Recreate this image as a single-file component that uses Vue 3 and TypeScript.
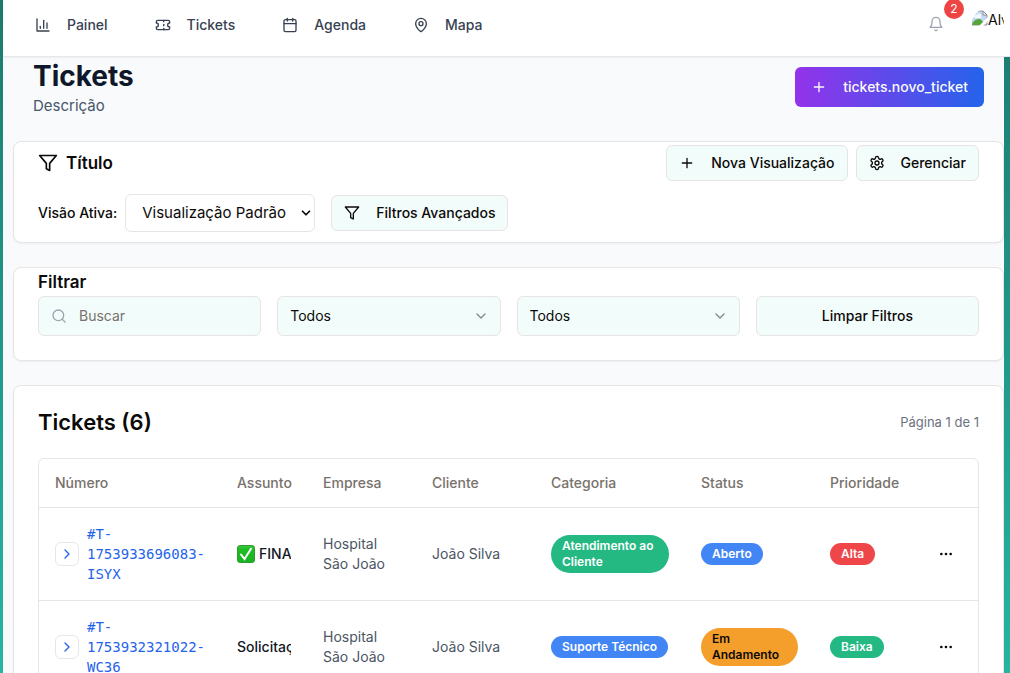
<script setup lang="ts">
import { ref } from 'vue'

interface NavItem {
  label: string
  paths: string[]
}

interface Ticket {
  number: string
  done: boolean
  subject: string
  company: string
  client: string
  category: { label: string; tone: string }
  status: { label: string; tone: string }
  priority: { label: string; tone: string }
}

const nav: NavItem[] = [
  { label: 'Painel', paths: ['M3 3v18h18', 'M18 17V9', 'M13 17V5', 'M8 17v-3'] },
  {
    label: 'Tickets',
    paths: [
      'M2 9a3 3 0 0 1 0 6v2a2 2 0 0 0 2 2h16a2 2 0 0 0 2-2v-2a3 3 0 0 1 0-6V7a2 2 0 0 0-2-2H4a2 2 0 0 0-2 2Z',
      'M13 5v2',
      'M13 17v2',
      'M13 11v2',
    ],
  },
  {
    label: 'Agenda',
    paths: ['M8 2v4', 'M16 2v4', 'M5 4h14a2 2 0 0 1 2 2v14a2 2 0 0 1-2 2H5a2 2 0 0 1-2-2V6a2 2 0 0 1 2-2Z', 'M3 10h18'],
  },
  {
    label: 'Mapa',
    paths: [
      'M20 10c0 5-5.54 10.19-7.4 11.8a1 1 0 0 1-1.2 0C9.54 20.19 4 15 4 10a8 8 0 0 1 16 0',
      'M15 10a3 3 0 1 1-6 0a3 3 0 1 1 6 0',
    ],
  },
]

const tickets: Ticket[] = [
  {
    number: '#T-1753933696083-ISYX',
    done: true,
    subject: 'FINA',
    company: 'Hospital São João',
    client: 'João Silva',
    category: { label: 'Atendimento ao Cliente', tone: 'green' },
    status: { label: 'Aberto', tone: 'blue' },
    priority: { label: 'Alta', tone: 'red' },
  },
  {
    number: '#T-1753932321022-WC36',
    done: false,
    subject: 'Solicitaç',
    company: 'Hospital São João',
    client: 'João Silva',
    category: { label: 'Suporte Técnico', tone: 'blue' },
    status: { label: 'Em Andamento', tone: 'amber' },
    priority: { label: 'Baixa', tone: 'green' },
  },
]

const columns = ['Número', 'Assunto', 'Empresa', 'Cliente', 'Categoria', 'Status', 'Prioridade']
const search = ref('')
</script>

<template>
  <div class="shell">
    <header class="topbar">
      <nav class="nav">
        <a v-for="item in nav" :key="item.label" href="#" class="nav-link">
          <svg class="icon" viewBox="0 0 24 24"><path v-for="d in item.paths" :key="d" :d="d" /></svg>
          {{ item.label }}
        </a>
      </nav>
      <div class="account">
        <button class="bell" type="button" aria-label="Notificações">
          <svg class="icon" viewBox="0 0 24 24">
            <path d="M6 8a6 6 0 0 1 12 0c0 7 3 9 3 9H3s3-2 3-9" />
            <path d="M10.3 21a1.94 1.94 0 0 0 3.4 0" />
          </svg>
          <span class="count">2</span>
        </button>
        <a href="#" class="avatar">
          <svg class="broken" viewBox="0 0 16 16">
            <path d="M0 1h11l4 4v10H0Z" fill="#c5d8f7" />
            <path d="M0 1h11l4 4v10H0Z" fill="none" stroke="#9a9a9a" />
            <path d="M11 1v4h4Z" fill="#fff" stroke="#8a8a8a" />
            <path d="M2 7a2 2 0 0 1 3-2a2 2 0 0 1 4 1a1.5 1.5 0 0 1 0 2H3Z" fill="#f4f8ff" />
            <path d="M0 15c1-4 4-6 7-6s4 3 5 6Z" fill="#55a63a" />
            <path d="M7 16L16 7v4l-5 5Z" fill="#fff" />
          </svg>
          <span>Alv</span>
        </a>
      </div>
    </header>

    <main class="page">
      <div class="heading">
        <div>
          <h1>Tickets</h1>
          <p>Descrição</p>
        </div>
        <button class="primary" type="button">
          <svg class="icon" viewBox="0 0 24 24"><path d="M5 12h14M12 5v14" /></svg>
          tickets.novo_ticket
        </button>
      </div>

      <section class="card views">
        <div class="bar">
          <h2 class="with-icon">
            <svg class="icon large" viewBox="0 0 24 24"><path d="M22 3H2l8 9.46V19l4 2v-8.54L22 3Z" /></svg>
            Título
          </h2>
          <div class="actions">
            <button class="btn" type="button">
              <svg class="icon" viewBox="0 0 24 24"><path d="M5 12h14M12 5v14" /></svg>
              Nova Visualização
            </button>
            <button class="btn" type="button">
              <svg class="icon" viewBox="0 0 24 24">
                <path d="M12.22 2h-.44a2 2 0 0 0-2 2v.18a2 2 0 0 1-1 1.73l-.43.25a2 2 0 0 1-2 0l-.15-.08a2 2 0 0 0-2.73.73l-.22.38a2 2 0 0 0 .73 2.73l.15.1a2 2 0 0 1 1 1.72v.51a2 2 0 0 1-1 1.74l-.15.09a2 2 0 0 0-.73 2.73l.22.38a2 2 0 0 0 2.73.73l.15-.08a2 2 0 0 1 2 0l.43.25a2 2 0 0 1 1 1.73V20a2 2 0 0 0 2 2h.44a2 2 0 0 0 2-2v-.18a2 2 0 0 1 1-1.73l.43-.25a2 2 0 0 1 2 0l.15.08a2 2 0 0 0 2.73-.73l.22-.39a2 2 0 0 0-.73-2.73l-.15-.08a2 2 0 0 1-1-1.74v-.5a2 2 0 0 1 1-1.74l.15-.09a2 2 0 0 0 .73-2.73l-.22-.38a2 2 0 0 0-2.73-.73l-.15.08a2 2 0 0 1-2 0l-.43-.25a2 2 0 0 1-1-1.73V4a2 2 0 0 0-2-2z" />
                <circle cx="12" cy="12" r="3" />
              </svg>
              Gerenciar
            </button>
          </div>
        </div>
        <div class="active-view">
          <label for="view">Visão Ativa:</label>
          <div class="select native">
            <select id="view"><option>Visualização Padrão</option></select>
            <svg class="icon" viewBox="0 0 24 24"><path d="m6 9 6 6 6-6" /></svg>
          </div>
          <button class="btn advanced" type="button">
            <svg class="icon" viewBox="0 0 24 24"><path d="M22 3H2l8 9.46V19l4 2v-8.54L22 3Z" /></svg>
            Filtros Avançados
          </button>
        </div>
      </section>

      <section class="card filters">
        <h2>Filtrar</h2>
        <div class="filter-grid">
          <div class="search">
            <svg class="icon" viewBox="0 0 24 24"><circle cx="11" cy="11" r="8" /><path d="m21 21-4.3-4.3" /></svg>
            <input v-model="search" type="text" placeholder="Buscar" aria-label="Buscar" />
          </div>
          <div v-for="name in ['Status', 'Prioridade']" :key="name" class="select">
            <select :aria-label="name"><option>Todos</option></select>
            <svg class="icon" viewBox="0 0 24 24"><path d="m6 9 6 6 6-6" /></svg>
          </div>
          <button class="btn clear" type="button">Limpar Filtros</button>
        </div>
      </section>

      <section class="card list">
        <div class="list-head">
          <h2>Tickets (6)</h2>
          <span>Página 1 de 1</span>
        </div>
        <div class="table-frame">
          <table>
            <colgroup>
              <col class="c-number" /><col class="c-subject" /><col class="c-company" /><col class="c-client" />
              <col class="c-category" /><col class="c-status" /><col class="c-priority" /><col class="c-menu" />
            </colgroup>
            <thead>
              <tr>
                <th v-for="c in columns" :key="c" scope="col">{{ c }}</th>
                <th scope="col" aria-label="Ações"></th>
              </tr>
            </thead>
            <tbody>
              <tr v-for="t in tickets" :key="t.number">
                <td>
                  <div class="number">
                    <button class="expand" type="button" aria-label="Expandir">
                      <svg class="icon" viewBox="0 0 24 24"><path d="m9 18 6-6-6-6" /></svg>
                    </button>
                    <a href="#">{{ t.number }}</a>
                  </div>
                </td>
                <td>
                  <div class="subject">
                    <svg v-if="t.done" class="check" viewBox="0 0 18 18" role="img" aria-label="Concluído">
                      <defs>
                        <linearGradient id="check-fill" x1="0" y1="0" x2="0" y2="1">
                          <stop offset="0" stop-color="#45c53c" />
                          <stop offset="0.2" stop-color="#1ebd25" />
                          <stop offset="1" stop-color="#18b321" />
                        </linearGradient>
                      </defs>
                      <rect x="0.5" y="0.5" width="17" height="17" rx="2.5" fill="url(#check-fill)" stroke="#2f9e32" />
                      <path d="M4 9.5L7.5 14L14 3.8" fill="none" stroke="#fff" stroke-width="2" stroke-linecap="round" />
                    </svg>
                    <span>{{ t.subject }}</span>
                  </div>
                </td>
                <td class="muted">{{ t.company }}</td>
                <td class="muted">{{ t.client }}</td>
                <td><span class="badge" :class="t.category.tone">{{ t.category.label }}</span></td>
                <td><span class="badge" :class="t.status.tone">{{ t.status.label }}</span></td>
                <td><span class="badge" :class="t.priority.tone">{{ t.priority.label }}</span></td>
                <td>
                  <button class="more" type="button" aria-label="Mais opções">
                    <svg class="icon" viewBox="0 0 24 24">
                      <circle cx="12" cy="12" r="1" /><circle cx="19" cy="12" r="1" /><circle cx="5" cy="12" r="1" />
                    </svg>
                  </button>
                </td>
              </tr>
            </tbody>
          </table>
        </div>
      </section>
    </main>
  </div>
</template>

<style>
body {
  margin: 0;
}
</style>

<style scoped>
* {
  box-sizing: border-box;
}

.shell {
  height: 100vh;
  overflow: hidden;
  padding-left: 3px;
  display: flex;
  flex-direction: column;
  background: linear-gradient(180deg, #1c7a6f, #25b5a2);
  color: #0c0a09;
  font: 14px/20px Inter, "Liberation Sans", sans-serif;
}

h1,
h2,
p {
  margin: 0;
}

button,
input,
select {
  font: inherit;
  color: inherit;
}

button {
  cursor: pointer;
}

a {
  color: inherit;
  text-decoration: none;
}

.icon {
  width: 16px;
  height: 16px;
  flex: none;
  fill: none;
  stroke: currentColor;
  stroke-width: 2;
  stroke-linecap: round;
  stroke-linejoin: round;
}

.icon.large {
  width: 20px;
  height: 20px;
}

.topbar {
  position: relative;
  flex: none;
  display: flex;
  justify-content: space-between;
  height: 57px;
  padding: 0 6px 0 32px;
  background: #fff;
  border-bottom: 1px solid #e5e7eb;
  box-shadow: 0 1px 2px rgba(0, 0, 0, 0.05);
}

.nav {
  display: flex;
  gap: 47px;
  height: 50px;
}

.nav-link {
  display: flex;
  align-items: center;
  gap: 16px;
  color: #374151;
  font-weight: 500;
}

.account {
  display: flex;
  align-items: flex-start;
  gap: 20px;
  padding-top: 8px;
}

.bell {
  position: relative;
  display: flex;
  padding: 8px;
  border: 0;
  background: none;
  color: #9ca3af;
}

.count {
  position: absolute;
  top: -9px;
  right: -12px;
  width: 20px;
  height: 20px;
  border-radius: 50%;
  background: #ef4444;
  color: #fff;
  font-size: 12px;
  text-align: center;
}

.avatar {
  display: flex;
  width: 32px;
  height: 32px;
  padding-top: 2px;
  border-radius: 50%;
  overflow: hidden;
}

.broken {
  flex: none;
  width: 16px;
  height: 16px;
}

.page {
  flex: 1;
  min-height: 0;
  margin-right: 6px;
  padding: 0 0 0 10px;
  display: flex;
  flex-direction: column;
  gap: 24px;
  background: #f8fafc;
}

.heading {
  flex: none;
  display: flex;
  justify-content: space-between;
  align-items: center;
  padding: 0 20px;
}

h1 {
  color: #0f172a;
  font-size: 28px;
  line-height: 38px;
}

.heading p {
  color: #475569;
  font-size: 15px;
  line-height: 22px;
}

.primary {
  display: flex;
  align-items: center;
  gap: 16px;
  height: 40px;
  padding: 0 16px;
  border: 0;
  border-radius: 6px;
  background: linear-gradient(90deg, #9333ea, #2563eb);
  color: #f8fafc;
  font-weight: 500;
}

.card {
  flex: none;
  padding: 0 24px;
  background: #fff;
  border: 1px solid #e7e5e4;
  border-radius: 8px;
  box-shadow: 0 1px 2px rgba(0, 0, 0, 0.05);
}

h2 {
  font-size: 17px;
  line-height: 28px;
  font-weight: 600;
}

.with-icon {
  display: flex;
  align-items: center;
  gap: 8px;
}

.views {
  padding-top: 3px;
  padding-bottom: 10px;
}

.bar {
  display: flex;
  align-items: center;
  justify-content: space-between;
}

.actions {
  display: flex;
  gap: 8px;
}

.btn {
  display: flex;
  align-items: center;
  justify-content: center;
  gap: 16px;
  height: 36px;
  padding: 0 12px;
  border: 1px solid #e7e5e4;
  border-radius: 6px;
  background: #f2fcfa;
  font-weight: 500;
}

.active-view {
  display: flex;
  align-items: center;
  gap: 8px;
  margin-top: 13px;
  font-weight: 500;
}

.advanced {
  margin-left: 8px;
}

.select {
  display: grid;
  align-items: center;
}

.select > * {
  grid-area: 1 / 1;
}

.select select {
  appearance: none;
  width: 100%;
  height: 40px;
  padding: 0 12px;
  border: 1px solid #e7e5e4;
  border-radius: 6px;
  background: #f2fcfa;
}

.select .icon {
  justify-self: end;
  margin-right: 12px;
  color: #858987;
  pointer-events: none;
}

.select.native select {
  height: 38px;
  padding: 0 28px 0 16px;
  background: #fff;
  font-size: 15px;
  font-weight: 400;
}

.select.native .icon {
  width: 14px;
  height: 14px;
  margin-right: 2px;
  color: #0c0a09;
  stroke-width: 3;
}

.filters {
  padding-bottom: 24px;
}

.filter-grid {
  display: grid;
  grid-template-columns: repeat(4, minmax(0, 1fr));
  gap: 16px;
}

.search {
  display: flex;
  align-items: center;
  gap: 12px;
  height: 40px;
  padding: 0 12px;
  border: 1px solid #e7e5e4;
  border-radius: 6px;
  background: #f2fcfa;
  color: #9ca3af;
}

.search input {
  flex: 1;
  min-width: 0;
  padding: 0;
  border: 0;
  outline: 0;
  background: none;
  color: #0c0a09;
}

.search input::placeholder {
  color: #78716c;
  opacity: 1;
}

.clear {
  height: 40px;
}

.list {
  padding-top: 20px;
}

.list-head {
  display: flex;
  align-items: center;
  justify-content: space-between;
  margin-bottom: 20px;
  color: #6b7280;
  font-size: 13px;
}

.list-head h2 {
  color: #0c0a09;
  font-size: 22px;
  line-height: 32px;
}

.table-frame {
  border: 1px solid #e5e5e5;
  border-radius: 6px;
}

table {
  width: 100%;
  table-layout: fixed;
  border-collapse: separate;
  border-spacing: 0;
}

.c-number { width: 182px; }
.c-subject { width: 86px; }
.c-company { width: 109px; }
.c-client { width: 119px; }
.c-category { width: 150px; }
.c-status { width: 129px; }
.c-priority { width: 100px; }
.c-menu { width: 64px; }

th {
  height: 49px;
  padding: 0 16px;
  border-bottom: 1px solid #e5e5e5;
  color: #78716c;
  font-weight: 500;
  text-align: left;
}

td {
  padding: 16px;
  border-bottom: 1px solid #e5e5e5;
  vertical-align: middle;
}

.number {
  display: flex;
  align-items: center;
  gap: 8px;
}

.number a {
  color: #2563eb;
  font-family: "DejaVu Sans Mono", "Liberation Mono", monospace;
}

.expand {
  flex: none;
  display: flex;
  align-items: center;
  justify-content: center;
  width: 24px;
  height: 24px;
  padding: 0;
  border: 1px solid #e5e7eb;
  border-radius: 6px;
  background: #fff;
  color: #2563eb;
}

.subject {
  display: flex;
  align-items: center;
  gap: 4px;
  overflow: hidden;
  white-space: nowrap;
  color: #111827;
  font-weight: 500;
}

.check {
  flex: none;
  width: 18px;
  height: 18px;
}

.muted {
  color: #4b5563;
}

.badge {
  display: inline-block;
  vertical-align: middle;
  padding: 3px 11px;
  border-radius: 19px;
  color: #fff;
  font-size: 12px;
  line-height: 16px;
  font-weight: 600;
}

.green { background: #24b883; }
.blue { background: #4285f4; }
.red { background: #ef4649; }
.amber { background: #f49f2c; color: #0c0a09; }

.more {
  display: flex;
  padding: 8px;
  border: 0;
  background: none;
}
</style>
